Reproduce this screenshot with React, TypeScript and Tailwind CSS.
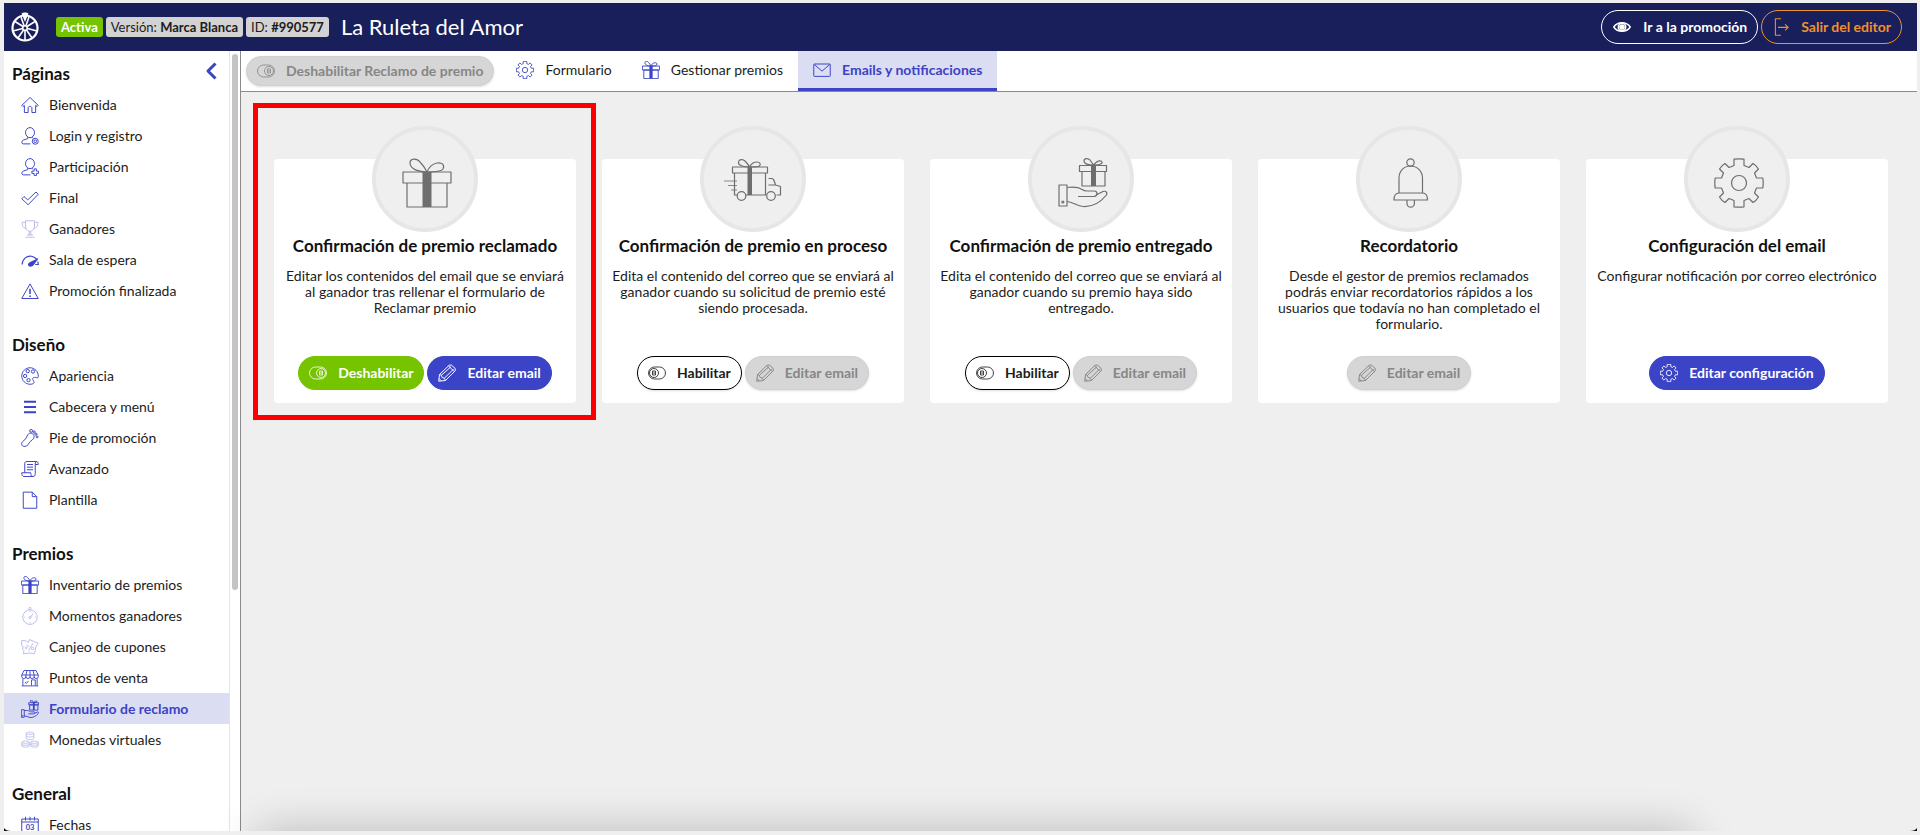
import React from "react";

type IconProps = { className?: string; stroke?: number };

function Svg({
  box = "0 0 24 24",
  stroke = 1.3,
  className = "size-[18px] shrink-0",
  children,
}: IconProps & { box?: string; children: React.ReactNode }) {
  return (
    <svg
      viewBox={box}
      fill="none"
      stroke="currentColor"
      strokeWidth={stroke}
      strokeLinejoin="round"
      className={className}
      aria-hidden="true"
    >
      {children}
    </svg>
  );
}

function GiftIcon({ className, stroke = 2.6 }: IconProps) {
  return (
    <Svg box="0 0 50 50" stroke={stroke} className={className}>
      <path d="M1 14h48v11H1zM5 25h40v24H5z" />
      <path d="M25 14C19 14 8 12 8 5C8 0 15 0 18 4C21 7 23 10 25 14zM25 14C27 9 30 6 35 5C40 4 43 7 41 11C39 14 31 14 25 14z" />
      <path d="M20.500 14h9v35h-9z" fill="currentColor" stroke="none" />
    </Svg>
  );
}

function TruckIcon({ className }: IconProps) {
  return (
    <Svg box="0 -1 62 50" stroke={1.2} className={className}>
      <path d="M8.500 8h35v6h-35zM10.500 14v22h2.500M22 36h20.500M41.500 14v22" />
      <path d="M25.500 8C21 8 14 7 14.500 3C15 0 19 0 21 2C23 4 24.500 6 25.500 8zM25.500 8C27 5 30 3 33 3C36 3 37 5 35.500 7C34 8 29 8 25.500 8z" />
      <path d="M44.500 19.500H48c1.500 0 2 1.500 3.500 6.500l5 1.500v8.500h-4M44.500 26h7" />
      <path d="M0 22h13M4 26.500h9M7 31h6" strokeWidth={0.8} />
      <path d="M23.500 8h4.500v28h-4.500z" fill="currentColor" stroke="none" />
      <circle cx="17.500" cy="37" r="4.300" fill="#efefef" />
      <circle cx="47" cy="37" r="4.300" fill="#efefef" />
    </Svg>
  );
}

function HandGiftIcon({ className, stroke = 2.6 }: IconProps) {
  return (
    <Svg box="0 0 50 50" stroke={stroke} className={className}>
      <path d="M21.500 7.500h27v6h-27zM24 13.500h23V28H24z" />
      <path d="M35.500 7C31 7 26 6 26 3C26 0 30 0 32 2zM35.500 7C38 4 40 2 43 3C46 5 43 7 35.500 7z" />
      <path d="M33 7.500h5V28h-5z" fill="currentColor" stroke="none" />
      <path d="M1 27h8v21H1zM9 29.500c8-1 12 0 15 2c1.500 1 3 1.500 5 1.500h7c4 0 4 5 0 5.500H20" />
      <path d="M38 37l7-3.500c3-1 5 1.500 3 4C41 46 33 49 25 48.500C19 48 15 44 9 43.500" />
      <circle cx="4.800" cy="44" r="1" />
    </Svg>
  );
}

function BellIcon({ className }: IconProps) {
  return (
    <Svg box="0 0 50 50" stroke={1.2} className={className}>
      <circle cx="24.500" cy="4.500" r="3.700" />
      <path d="M13 35V20c0-7 5-12 11.500-12S36.500 13 36.500 20v15" />
      <path d="M8 42c0-5 2-7 5-7h23.500c3 0 5 2 5 7zM21 42v3.500a3.700 3.700 0 0 0 7.400 0V42" />
    </Svg>
  );
}

function GearIcon({ className, stroke = 2.4 }: IconProps) {
  return (
    <Svg box="0 0 50 50" stroke={stroke} className={className}>
      <path d="M20 7.500V1.200Q25 .400 30 1.200V7.500L35 9.500L39 5.500Q42.500 7.500 44.500 11L40.500 15L42.500 20H48.800Q49.600 25 48.800 30H42.500L40.500 35L44.500 39Q42.500 42.500 39 44.500L35 40.500L30 42.500V48.800Q25 49.600 20 48.800V42.500L15 40.500L11 44.500Q7.500 42.500 5.500 39L9.500 35L7.500 30H1.200Q.400 25 1.200 20H7.500L9.500 15L5.500 11Q7.500 7.500 11 5.500L15 9.500Z" />
      <circle cx="25" cy="25" r="7.500" />
    </Svg>
  );
}

function ToggleIcon({ on = true }: { on?: boolean }) {
  const cx = on ? 16 : 8;
  return (
    <Svg stroke={1.1}>
      <rect x="0.700" y="4" width="22.600" height="16" rx="8" />
      <circle cx={cx} cy="12" r="6" />
      <path d={on ? "M14 9v6M16 8v8M18 9v6" : "M6 9v6M8 8v8M10 9v6"} />
    </Svg>
  );
}

function PencilIcon() {
  return (
    <Svg stroke={1.3}>
      <path d="M1 23l1-9L15 1.500h3L23 6v3L10 22zM2 14l2.500 1 1 3 3 1L10 22M14 2.500l7.500 7.500M4.500 15L17.500 3.500M8.500 19L21 6.500M1.500 19.500l3 3" />
    </Svg>
  );
}

function MailIcon() {
  return (
    <Svg>
      <rect x="1" y="4" width="22" height="16.500" rx="1" />
      <path d="M1.500 4.500L12 13.500l10.500-9" />
    </Svg>
  );
}

function HomeIcon() {
  return (
    <Svg>
      <path d="M12 2L1 12.500l1.500 1.500 2-1.500V22H9.500v-6c0-3 5-3 5 0v6h5v-9.500l2 1.500 1.500-1.500z" />
    </Svg>
  );
}

function UserIcon({ plus = false }: { plus?: boolean }) {
  return (
    <Svg>
      <ellipse cx="12" cy="7.500" rx="6" ry="6.700" />
      <path d="M9 13.500v2L3 17.500c-2.500 1-2.500 5 0 5h9.500M15 13.500v1.500" />
      {plus ? (
        <path d="M17.500 14.500h3v3h3v3h-3v3h-3v-3h-3v-3h3z" />
      ) : (
        <>
          <circle cx="19" cy="19" r="4" />
          <circle cx="19" cy="19" r="1.800" />
        </>
      )}
    </Svg>
  );
}

function CheckIcon() {
  return (
    <Svg>
      <path d="M1 13l3-3 5 4.500L20 4l3 3L9.500 21z" />
    </Svg>
  );
}

function TrophyIcon() {
  return (
    <Svg>
      <path d="M6 1h12v7c0 5-3 7-6 7s-6-2-6-7zM6 3H1.500c0 5 1 8 6 8M18 3h4.500c0 5-1 8-6 8M11 15v5M13 15v5M8 20h8M6 23h12" />
    </Svg>
  );
}

function GaugeIcon() {
  return (
    <Svg stroke={1.600}>
      <path d="M1.500 18C2 10 8 6 14 7c3 .5 5 2 7 4M22.500 14l.5 4h-4" />
      <path d="M10 18c0-3 6-3.500 12-7.500L16 18.500c-2 2.500-6 2-6-.5z" fill="currentColor" />
    </Svg>
  );
}

function WarningIcon() {
  return (
    <Svg>
      <path d="M12 2.500L1 22h22z" />
      <path d="M12 9v7M12 18v2" strokeWidth={2} />
    </Svg>
  );
}

function PaletteIcon() {
  return (
    <Svg>
      <path d="M23 13C23.500 6 18 1 12 1S1 6 1 12s5 11 11 11c5 0 6-2 5-4s-3-4 0-5c2-1 6 2 6-1z" />
      <circle cx="9" cy="5.500" r="2.200" />
      <circle cx="16" cy="6" r="2.200" />
      <circle cx="5.500" cy="12" r="2.200" />
      <circle cx="10" cy="17.500" r="2.200" />
    </Svg>
  );
}

function MenuIcon() {
  return (
    <Svg stroke={2.4}>
      <path d="M4 5h16M4 12h16M4 19h16" />
    </Svg>
  );
}

function FootIcon() {
  return (
    <Svg>
      <path d="M9.500 7c2-3 8-1 8 3 0 5-5 5-6.500 8.500C9.500 22 6 24 3 23c-3-1-2.500-5-.5-6.500C6.500 14 7.500 10 9.500 7z" />
      <circle cx="13.500" cy="2.500" r="1.900" />
      <circle cx="17.500" cy="4" r="1.500" />
      <circle cx="20" cy="7" r="1.400" />
      <circle cx="21.500" cy="10.500" r="1.300" />
    </Svg>
  );
}

function ScrollIcon() {
  return (
    <Svg>
      <path d="M5 17V5c0-2 1-3 3-3h12c2 0 3 1 3 4h-4v12c0 3-1 4-3 4H4c-2 0-3-2-3-5h12c0 3 1 5 3 5M19 6c0-3 .5-4 2-4M8 6h8M8 9.500h8M8 13h8" />
    </Svg>
  );
}

function PageIcon() {
  return (
    <Svg>
      <path d="M3 1.500h12l6 6v15.500H3zM15 1.500v6h6" />
    </Svg>
  );
}

function StopwatchIcon() {
  return (
    <Svg>
      <circle cx="12" cy="13.500" r="9.700" />
      <circle cx="12" cy="2" r="1.500" />
      <circle cx="12" cy="14" r="1.500" />
      <path d="M13 13l3-4M12 5.500v1M12 20.500v1M4 13.500h1M19 13.500h1" />
    </Svg>
  );
}

function CouponIcon() {
  return (
    <Svg>
      <path d="M1 3l6 1 3 2 1-4 12 5-3 4-2 10-6-1-9 1 1-4-2-2 1-3-2-2zM8 9l3 3M16 7l-6 10" />
      <circle cx="15.500" cy="14" r="1.600" />
      <circle cx="7" cy="13" r="1.300" />
    </Svg>
  );
}

function StoreIcon() {
  return (
    <Svg stroke={1.2}>
      <path d="M4 2h16l3 6v2a2.700 2.700 0 0 1-5.500 0 2.700 2.700 0 0 1-5.500 0 2.700 2.700 0 0 1-5.500 0A2.700 2.700 0 0 1 1 10V8zM1 8h22M8 2L6.500 8v2M16 2l1.500 6v2M12 2v8M2.500 13v9.500M21.500 13v9.500M14 22V14.500h5V22M7 17l-2 2M10 16l-3 3.500M1 22.500h22" />
    </Svg>
  );
}

function CoinsIcon() {
  return (
    <Svg stroke={1.2}>
      <path d="M7 3c0-2 10-2 10 0v7c0 2-10 2-10 0zM7 3c0 2 10 2 10 0M7 6.500c0 2 10 2 10 0M1 15c0-2 10-2 10 0v5c0 2-10 2-10 0zM1 15c0 2 10 2 10 0M1 17.500c0 2 10 2 10 0M13 15c0-2 10-2 10 0v5c0 2-10 2-10 0zM13 15c0 2 10 2 10 0M13 17.500c0 2 10 2 10 0" />
    </Svg>
  );
}

function CalendarIcon() {
  return (
    <Svg>
      <path d="M1 4h22v19H1zM1 8h22M6 1v5M12 1v5M18 1v5" />
      <text
        x="12"
        y="18"
        textAnchor="middle"
        fontSize="10"
        fontWeight="700"
        fill="currentColor"
        stroke="none"
      >
        03
      </text>
    </Svg>
  );
}

function EyeIcon() {
  return (
    <Svg stroke={2} className="w-[20px] h-[18px] shrink-0">
      <path d="M1 12C6 4.500 18 4.500 23 12C18 19.500 6 19.500 1 12z" />
      <circle cx="12" cy="12" r="5" />
      <circle cx="12" cy="12" r="2.800" fill="currentColor" />
    </Svg>
  );
}

function ExitIcon() {
  return (
    <Svg stroke={1.4}>
      <path d="M12 1H4.500v22H12M8 12.500h13M17.500 8.500l4 4-4 4" />
    </Svg>
  );
}

function WheelLogo() {
  return (
    <Svg box="0 0 28 30" stroke={1.6} className="w-[28px] h-[30px] shrink-0 text-white">
      <circle cx="14" cy="16" r="12.500" strokeWidth={2.2} />
      <circle cx="14" cy="16" r="2.300" />
      <path d="M14 18.500V28M16 14.500l8-5M12 14.500l-8-5M16.500 16.500l9.500 2.500M11.500 16.500L2 19M15.500 18l5.500 8M12.500 18L7 26M15 13.500L18 5M13 13.500L10 5" />
      <path d="M10.500 1.500C12 0 16 0 17.500 1.500L14 10z" fill="currentColor" stroke="none" />
    </Svg>
  );
}

type Item = { label: string; icon: React.ReactNode; faded?: boolean; active?: boolean };

const sections: { title: string; items: Item[] }[] = [
  {
    title: "Páginas",
    items: [
      { label: "Bienvenida", icon: <HomeIcon /> },
      { label: "Login y registro", icon: <UserIcon /> },
      { label: "Participación", icon: <UserIcon plus /> },
      { label: "Final", icon: <CheckIcon /> },
      { label: "Ganadores", icon: <TrophyIcon />, faded: true },
      { label: "Sala de espera", icon: <GaugeIcon /> },
      { label: "Promoción finalizada", icon: <WarningIcon /> },
    ],
  },
  {
    title: "Diseño",
    items: [
      { label: "Apariencia", icon: <PaletteIcon /> },
      { label: "Cabecera y menú", icon: <MenuIcon /> },
      { label: "Pie de promoción", icon: <FootIcon /> },
      { label: "Avanzado", icon: <ScrollIcon /> },
      { label: "Plantilla", icon: <PageIcon /> },
    ],
  },
  {
    title: "Premios",
    items: [
      { label: "Inventario de premios", icon: <GiftIcon /> },
      { label: "Momentos ganadores", icon: <StopwatchIcon />, faded: true },
      { label: "Canjeo de cupones", icon: <CouponIcon />, faded: true },
      { label: "Puntos de venta", icon: <StoreIcon /> },
      { label: "Formulario de reclamo", icon: <HandGiftIcon />, active: true },
      { label: "Monedas virtuales", icon: <CoinsIcon />, faded: true },
    ],
  },
  {
    title: "General",
    items: [{ label: "Fechas", icon: <CalendarIcon /> }],
  },
];

const tabs: Item[] = [
  { label: "Formulario", icon: <GearIcon /> },
  { label: "Gestionar premios", icon: <GiftIcon /> },
  { label: "Emails y notificaciones", icon: <MailIcon />, active: true },
];

const variants = {
  green: "bg-[#76c300] border-[#76c300] text-white",
  blue: "bg-[#3b43c6] border-[#3b43c6] text-white",
  outline: "bg-white border-black text-[#1c1c1c] shadow-sm",
  disabled: "bg-[#d6d6d6] border-[#d0d0d0] text-[#868686] shadow-sm",
  white: "border-white text-white",
  orange: "border-[#f0912d] text-[#f0912d]",
};

function Pill({
  variant,
  icon,
  size = "h-[34px]",
  children,
}: {
  variant: keyof typeof variants;
  icon: React.ReactNode;
  size?: string;
  children: React.ReactNode;
}) {
  return (
    <button
      type="button"
      disabled={variant === "disabled"}
      className={`flex items-center gap-[11px] px-[10px] border rounded-full text-sm font-bold whitespace-nowrap ${size} ${variants[variant]}`}
    >
      {icon}
      {children}
    </button>
  );
}

const enable = (
  <Pill variant="outline" icon={<ToggleIcon on={false} />}>
    Habilitar
  </Pill>
);
const editDisabled = (
  <Pill variant="disabled" icon={<PencilIcon />}>
    Editar email
  </Pill>
);

const cards = [
  {
    title: "Confirmación de premio reclamado",
    text: "Editar los contenidos del email que se enviará al ganador tras rellenar el formulario de Reclamar premio",
    icon: <GiftIcon className="size-[50px]" stroke={1.2} />,
    highlighted: true,
    actions: (
      <>
        <Pill variant="green" icon={<ToggleIcon />}>
          Deshabilitar
        </Pill>
        <Pill variant="blue" icon={<PencilIcon />}>
          Editar email
        </Pill>
      </>
    ),
  },
  {
    title: "Confirmación de premio en proceso",
    text: "Edita el contenido del correo que se enviará al ganador cuando su solicitud de premio esté siendo procesada.",
    icon: <TruckIcon className="w-[62px] h-[50px]" />,
    actions: (
      <>
        {enable}
        {editDisabled}
      </>
    ),
  },
  {
    title: "Confirmación de premio entregado",
    text: "Edita el contenido del correo que se enviará al ganador cuando su premio haya sido entregado.",
    icon: <HandGiftIcon className="size-[50px]" stroke={1.2} />,
    actions: (
      <>
        {enable}
        {editDisabled}
      </>
    ),
  },
  {
    title: "Recordatorio",
    text: "Desde el gestor de premios reclamados podrás enviar recordatorios rápidos a los usuarios que todavía no han completado el formulario.",
    icon: <BellIcon className="size-[50px]" />,
    actions: editDisabled,
  },
  {
    title: "Configuración del email",
    text: "Configurar notificación por correo electrónico",
    icon: <GearIcon className="size-[50px]" stroke={1.2} />,
    actions: (
      <Pill variant="blue" icon={<GearIcon />}>
        Editar configuración
      </Pill>
    ),
  },
];

function Header() {
  return (
    <header className="flex items-center h-12 shrink-0 pl-[7px] pr-[15px] bg-[#191f5b]">
      <WheelLogo />
      <div className="flex gap-[3px] ml-[17px] text-[13px] leading-5 text-[#1c1c1c]">
        <span className="px-[5px] rounded-[3px] bg-[#76c300] text-white font-bold">Activa</span>
        <span className="px-[5px] rounded-[3px] bg-[#d3d3d3]">
          Versión: <b>Marca Blanca</b>
        </span>
        <span className="px-[5px] rounded-[3px] bg-[#d3d3d3]">
          ID: <b>#990577</b>
        </span>
      </div>
      <h1 className="ml-3 text-[22px] leading-7 text-white">La Ruleta del Amor</h1>
      <div className="flex gap-[3px] ml-auto">
        <Pill variant="white" icon={<EyeIcon />}>
          Ir a la promoción
        </Pill>
        <Pill variant="orange" icon={<ExitIcon />}>
          Salir del editor
        </Pill>
      </div>
    </header>
  );
}

function Sidebar() {
  return (
    <aside className="flex w-[237px] shrink-0 bg-white border-r border-[#8a8a8a] overflow-hidden">
      <nav className="grow flex flex-col gap-[27px] pt-[11px] border-r border-[#e4e4e4]">
        {sections.map((section, i) => (
          <section key={section.title}>
            <div className="flex justify-between items-start h-6 mb-[3px] pl-2 pr-3">
              <h2 className="text-[17px] leading-6 font-bold text-[#111]">{section.title}</h2>
              {i === 0 && (
                <button type="button" aria-label="Contraer menú" className="text-[#3b43c6]">
                  <Svg box="0 0 12 18" stroke={3} className="w-[12px] h-[18px]">
                    <path d="M10.500 1.500L3 9l7.500 7.500" />
                  </Svg>
                </button>
              )}
            </div>
            <ul>
              {section.items.map((item) => (
                <li key={item.label}>
                  <a
                    href="#"
                    className={`flex items-center gap-[10px] h-[31px] pl-[17px] text-sm whitespace-nowrap ${
                      item.active ? "bg-[#dbddf3] text-[#3b43c6] font-bold" : "text-[#1c1c1c]"
                    }`}
                  >
                    <span className={`text-[#3b43c6] ${item.faded ? "opacity-35" : ""}`}>{item.icon}</span>
                    {item.label}
                  </a>
                </li>
              ))}
            </ul>
          </section>
        ))}
      </nav>
      <div className="w-[10px] shrink-0 pt-[3px] pl-[2px]">
        <div className="w-[6px] h-[536px] rounded-full bg-[#c4c4c4]" />
      </div>
    </aside>
  );
}

function TabBar() {
  return (
    <div className="flex h-[41px] shrink-0 pl-[5px] bg-white border-b border-[#8a8a8a]">
      <div className="flex items-center">
        <Pill variant="disabled" icon={<ToggleIcon />} size="h-[30px]">
          Deshabilitar Reclamo de premio
        </Pill>
      </div>
      <nav className="flex ml-[7px]">
        {tabs.map((tab) => (
          <a
            key={tab.label}
            href="#"
            className={`flex items-center gap-[11px] px-[15px] border-b-[3px] text-sm whitespace-nowrap ${
              tab.active
                ? "bg-[#dbddf3] border-[#3b43c6] text-[#3b43c6] font-bold"
                : "border-transparent text-[#1c1c1c]"
            }`}
          >
            <span className="text-[#3b43c6]">{tab.icon}</span>
            {tab.label}
          </a>
        ))}
      </nav>
    </div>
  );
}

export default function App() {
  return (
    <div className="h-screen bg-[#efefef] pt-[3px] pr-[3px] pb-1 pl-1 font-['Lato','Open_Sans',sans-serif]">
      <div className="relative flex flex-col h-full overflow-hidden">
        <Header />
        <div className="flex grow min-h-0">
          <Sidebar />
          <main className="grow min-w-0">
            <TabBar />
            <div className="grid grid-cols-5 gap-[26px] pt-[34px] pl-[33px] pr-[29px]">
              {cards.map((card) => (
                <article key={card.title} className="relative flex flex-col items-center">
                  {card.highlighted && (
                    <div className="absolute -top-[23px] -bottom-[17px] -left-[21px] -right-5 border-[5px] border-[#fb0000]" />
                  )}
                  <div className="z-10 flex items-center justify-center size-[106px] -mb-[73px] pt-[7px] pl-[3px] rounded-full border-4 border-[#e5e6e8] bg-[#efefef] text-[#6e6e6e]">
                    {card.icon}
                  </div>
                  <div className="flex flex-col items-center w-full h-[244px] pt-[75px] px-[9px] pb-[13px] rounded-[4px] bg-white text-center">
                    <h2 className="text-[17px] leading-6 font-bold whitespace-nowrap text-[#111]">{card.title}</h2>
                    <p className="mt-[10px] text-sm leading-4 text-[#1c1c1c]">{card.text}</p>
                    <div className="flex gap-[3px] mt-auto">{card.actions}</div>
                  </div>
                </article>
              ))}
            </div>
          </main>
        </div>
        <div className="absolute top-full left-[250px] right-[220px] h-10 rounded-full shadow-[0_0_44px_rgba(0,0,0,0.24)]" />
        <svg viewBox="0 0 7 3" className="absolute left-0 bottom-0 w-[7px] h-[3px]" aria-hidden="true">
          <path d="M0 0Q2 3 7 3H0z" fill="#111" />
        </svg>
        <svg viewBox="0 0 7 3" className="absolute right-0 bottom-0 w-[7px] h-[3px]" aria-hidden="true">
          <path d="M7 0Q5 3 0 3H7z" fill="#111" />
        </svg>
      </div>
    </div>
  );
}
